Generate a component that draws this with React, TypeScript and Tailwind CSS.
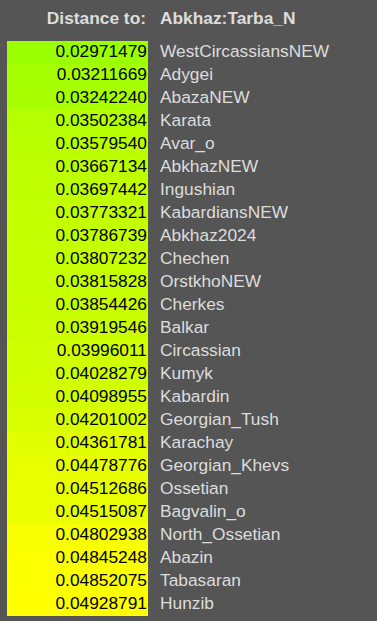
const rows: [string, string][] = [
  ["0.02971479", "WestCircassiansNEW"],
  ["0.03211669", "Adygei"],
  ["0.03242240", "AbazaNEW"],
  ["0.03502384", "Karata"],
  ["0.03579540", "Avar_o"],
  ["0.03667134", "AbkhazNEW"],
  ["0.03697442", "Ingushian"],
  ["0.03773321", "KabardiansNEW"],
  ["0.03786739", "Abkhaz2024"],
  ["0.03807232", "Chechen"],
  ["0.03815828", "OrstkhoNEW"],
  ["0.03854426", "Cherkes"],
  ["0.03919546", "Balkar"],
  ["0.03996011", "Circassian"],
  ["0.04028279", "Kumyk"],
  ["0.04098955", "Kabardin"],
  ["0.04201002", "Georgian_Tush"],
  ["0.04361781", "Karachay"],
  ["0.04478776", "Georgian_Khevs"],
  ["0.04512686", "Ossetian"],
  ["0.04515087", "Bagvalin_o"],
  ["0.04802938", "North_Ossetian"],
  ["0.04845248", "Abazin"],
  ["0.04852075", "Tabasaran"],
  ["0.04928791", "Hunzib"],
];

const max = 0.04928791;

export default function App() {
  return (
    <div
      className="w-[377px] h-[621px] bg-[#555555] overflow-hidden pl-[7px] pt-[8px]"
      style={{ fontFamily: '"Liberation Sans", Arial, sans-serif' }}
    >
      <div className="grid grid-cols-[141px_auto] gap-x-[12px] text-[17.33px] leading-[20px] font-bold text-[#dddddd] mb-[13px]">
        <div className="text-right pr-[2px]">Distance to:</div>
        <div>Abkhaz:Tarba_N</div>
      </div>
      <div className="grid grid-cols-[141px_auto] gap-x-[12px] text-[17.33px] leading-[20px]">
        {rows.map(([v, n]) => {
          const r = Math.round((255 * parseFloat(v)) / max);
          return (
            <div key={n} className="contents">
              <div
                className="h-[23px] text-right pr-[1px] text-black"
                style={{ backgroundColor: `rgb(${r},255,0)` }}
              >
                {v}
              </div>
              <div className="h-[23px] text-[#dddddd]">{n}</div>
            </div>
          );
        })}
      </div>
    </div>
  );
}
